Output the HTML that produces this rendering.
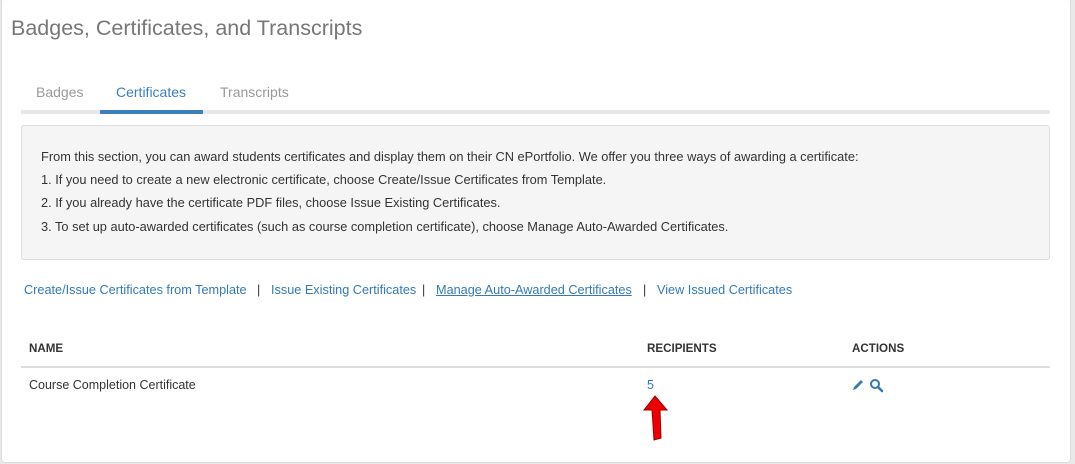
<!DOCTYPE html>
<html><head><style>
body{margin:0;width:1075px;height:464px;background:#e9e9e9;font-family:"Liberation Sans",sans-serif;overflow:hidden;position:relative}
.card{position:absolute;left:1px;top:-2px;width:1068px;height:463px;background:#fff;border:1px solid #ddd;border-radius:4px}
.a{position:absolute;white-space:nowrap}
.t{left:11px;top:16px;font-size:21.5px;color:#777}
.tab{top:84px;font-size:14px;color:#999}
.line{left:21px;top:110px;width:1029px;height:4px;background:#e8e8e8}
.act{left:100px;top:110px;width:103px;height:4px;background:#3a7fc0}
.box{left:21px;top:125px;width:1029px;height:135px;background:#f5f5f5;border:1px solid #ddd;border-radius:3px;box-sizing:border-box}
.p{left:41px;font-size:12.8px;color:#333}
.lk{top:283px;font-size:12.7px;color:#337ab7}
.sep{top:283px;font-size:12.5px;color:#333}
.h{top:342px;font-size:11.6px;font-weight:bold;color:#333}
</style></head><body>
<div class="card"></div>
<div class="a t">Badges, Certificates, and Transcripts</div>
<div class="a tab" style="left:36px">Badges</div>
<div class="a tab" style="left:116px;color:#3a7fc0">Certificates</div>
<div class="a tab" style="left:220px">Transcripts</div>
<div class="a line"></div><div class="a act"></div>
<div class="a box"></div>
<div class="a p" style="top:149px">From this section, you can award students certificates and display them on their CN ePortfolio. We offer you three ways of awarding a certificate:</div>
<div class="a p" style="top:172px">1. If you need to create a new electronic certificate, choose Create/Issue Certificates from Template.</div>
<div class="a p" style="top:195px">2. If you already have the certificate PDF files, choose Issue Existing Certificates.</div>
<div class="a p" style="top:219px">3. To set up auto-awarded certificates (such as course completion certificate), choose Manage Auto-Awarded Certificates.</div>
<div class="a lk" style="left:24px">Create/Issue Certificates from Template</div>
<div class="a sep" style="left:257px">|</div>
<div class="a lk" style="left:271px">Issue Existing Certificates</div>
<div class="a sep" style="left:422px">|</div>
<div class="a lk" style="left:436px;text-decoration:underline">Manage Auto-Awarded Certificates</div>
<div class="a sep" style="left:643px">|</div>
<div class="a lk" style="left:657px">View Issued Certificates</div>
<div class="a h" style="left:29px">NAME</div>
<div class="a h" style="left:647px">RECIPIENTS</div>
<div class="a h" style="left:852px">ACTIONS</div>
<div class="a" style="left:21px;top:366px;width:1029px;height:2px;background:#ddd"></div>
<div class="a" style="left:29px;top:378px;font-size:12.5px;color:#333">Course Completion Certificate</div>
<div class="a" style="left:647px;top:378px;font-size:12.5px;color:#337ab7">5</div>
<svg class="a" style="left:851px;top:377px" width="36" height="16" viewBox="0 0 36 16">
<path d="M2 13 L3 10 L10 3 L12 5 L5 12 Z" fill="#337ab7"/>
<circle cx="24" cy="7" r="4" fill="none" stroke="#337ab7" stroke-width="2"/>
<path d="M27 10 L31 14" stroke="#337ab7" stroke-width="2.5" stroke-linecap="round"/>
</svg>
<svg class="a" style="left:642px;top:394px" width="28" height="52" viewBox="0 0 28 52">
<path d="M13 2 L25 16 L18 16 L19 44 L12 46 L10 16 L2 16 Z" fill="#e00" stroke="#900" stroke-width="1"/>
</svg>
</body></html>
